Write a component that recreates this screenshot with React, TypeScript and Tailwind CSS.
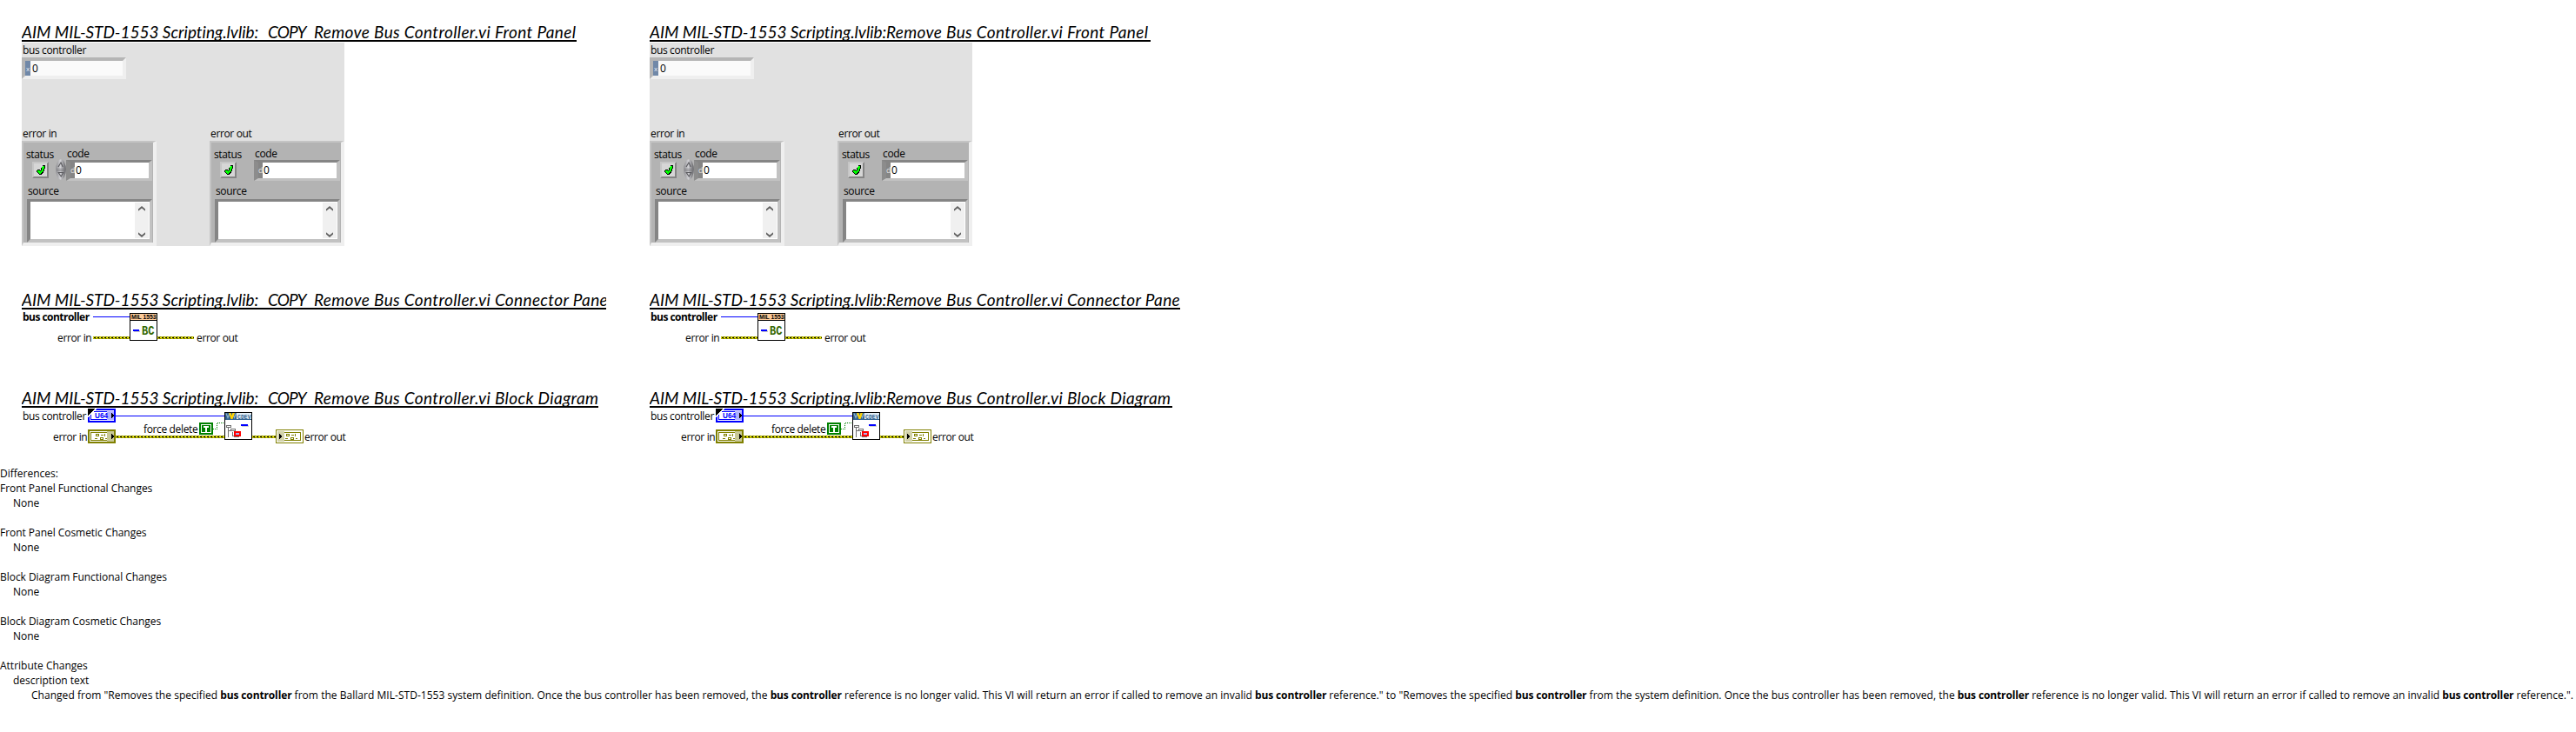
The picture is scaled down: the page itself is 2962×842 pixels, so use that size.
import type { ReactNode } from "react";

const LABEL = "font-['Open_Sans',sans-serif] text-[12px] tracking-[-0.36px] leading-[14px] text-black whitespace-nowrap";

function Heading({ copy, kind, width }: { copy: boolean; kind: string; width: string }) {
  return (
    <div className={`h-5 border-b-2 border-black ${width}`}>
      <h2 className="flex h-[18px] overflow-hidden whitespace-pre font-['Lato',sans-serif] text-[19px] italic leading-[17px] text-black [font-variant-ligatures:none]">
        <span className="w-[272px] shrink-0 tracking-[-0.02px]">AIM MIL-STD-1553 Scripting.lvlib:</span>
        {copy && <span className="w-[64px] shrink-0 pl-[11px] tracking-[-0.9px]">COPY</span>}
        <span className="tracking-[0.36px]">Remove Bus Controller.vi {kind}</span>
      </h2>
    </div>
  );
}

function CheckButton() {
  return (
    <div className="flex h-[19px] w-[19px] items-center justify-center border-2 border-t-[#c6c6c6] border-l-[#c6c6c6] border-r-[#858585] border-b-[#858585] bg-[#d6d6d6]">
      <svg width="12" height="13" viewBox="0 0 12 13" shapeRendering="crispEdges">
        <path d="M8 1h3v3l-1 1v2l-1 1v1l-2 3H4L1 9V7l1-1h2l1 1 1-1V4l2-2z" fill="#000" />
        <path d="M8 2h2v2L9 5v2L8 8 6 11H4L2 9V7h2l1 1 2-2V4z" fill="#00ff00" />
      </svg>
    </div>
  );
}

function Spinner() {
  return (
    <svg width="12" height="24" viewBox="0 0 12 24" className="-mt-px -ml-px block">
      <defs>
        <linearGradient id="knob" x1="0" x2="1">
          <stop offset="0" stopColor="#8a8a8e" />
          <stop offset="0.45" stopColor="#d2d2d6" />
          <stop offset="1" stopColor="#606064" />
        </linearGradient>
      </defs>
      <ellipse cx="6" cy="12" rx="5.8" ry="11.7" fill="url(#knob)" />
      <path d="M1 11.5h10M1 13.5h10" stroke="#77777b" strokeWidth="0.8" />
      <path d="M3 9l3-5 2.2 5M3.2 15.500h5.600l-2.600 4.500z" fill="none" stroke="#5a5a5e" strokeWidth="1.100" />
    </svg>
  );
}

function ScrollArrow({ up }: { up: boolean }) {
  return (
    <svg width="8" height="6" viewBox="0 0 8 6">
      <path d={up ? "M0 5.800V3.600L4 0l4 3.600v2.200L4 2.500z" : "M0 0.200v2.200L4 6l4-3.600V0.200L4 3.500z"} fill="#606060" />
    </svg>
  );
}

function Cluster({ control }: { control: boolean }) {
  return (
    <div className="h-[121px] w-[155px] border-t-2 border-l-2 border-r-4 border-b-4 border-t-[#c4c4c4] border-l-[#c4c4c4] border-r-[#efefef] border-b-[#efefef] bg-[#b3b3b3]">
      <div className="flex h-[20px] items-end">
        <span className={`${LABEL} -mb-px w-[47px] pl-[3px]`}>status</span>
        <span className={`${LABEL} pl-[3px]`}>code</span>
      </div>
      <div className="flex h-[25px]">
        <div className="w-[38px] pl-[10px] pt-[2px]">
          <CheckButton />
        </div>
        <div className="w-[11px] shrink-0">{control && <Spinner />}</div>
        <div className="flex h-[24px] w-[99px] border-t-[3px] border-r-4 border-b-[3px] border-l-[5px] border-t-[#858585] border-r-[#c2c2c2] border-b-[#c2c2c2] border-l-[#8c8c8c] bg-white">
          <span className="h-full w-[5px] bg-[#858585] font-['Open_Sans',sans-serif] text-[9px] leading-[18px] text-[#e0e0e0]">d</span>
          <span className={`${LABEL} pl-[1px] leading-[18px]`}>0</span>
        </div>
      </div>
      <div className={`${LABEL} h-[20px] pl-[5px] pt-[4px]`}>source</div>
      <div className="ml-1 flex h-[50px] w-[144px] justify-end border-t-[3px] border-r-[3px] border-b-4 border-l-4 border-t-[#858585] border-r-[#c2c2c2] border-b-[#c2c2c2] border-l-[#858585] bg-white p-px">
        <div className="flex h-full w-4 flex-col items-center justify-between bg-[#f0f0f0] pt-1 pb-px">
          <ScrollArrow up />
          <ScrollArrow up={false} />
        </div>
      </div>
    </div>
  );
}

function FrontPanel() {
  return (
    <div className="mt-px h-[234px] w-[371px] bg-[#e1e1e1]">
      <div className={`${LABEL} h-[17px] pl-px pt-[2px]`}>bus controller</div>
      <div className="flex h-[25px] w-[120px] border-4 border-[#efefef] border-t-[#b5b5b5] border-l-[#b5b5b5] bg-[#fafafa]">
        <span className="h-full w-[6px] bg-[#7088a8] pl-[1px] font-['Open_Sans',sans-serif] text-[8px] leading-[18px] text-[#e6ecf4]">x</span>
        <span className={`${LABEL} pl-[2px] leading-[17px]`}>0</span>
      </div>
      <div className="mt-[56px] flex">
        <div className="w-[216px]">
          <div className={`${LABEL} h-[15px] pl-px`}>error in</div>
          <Cluster control />
        </div>
        <div>
          <div className={`${LABEL} h-[15px] pl-px`}>error out</div>
          <Cluster control={false} />
        </div>
      </div>
    </div>
  );
}

function ErrorWire({ x, y, w }: { x: number; y: number; w: number }) {
  return (
    <g shapeRendering="crispEdges">
      <rect x={x} y={y} width={w} height="3" fill="#808000" />
      <path d={`M${x} ${y + 0.5}h${w}M${x} ${y + 2.5}h${w}`} stroke="#b8b800" strokeDasharray="2 2" />
      <path d={`M${x} ${y + 1.5}h${w}`} stroke="#ffff00" />
      <path d={`M${x + 1} ${y + 1.5}h${w - 1}`} stroke="#000" strokeDasharray="2 2" />
    </g>
  );
}

function Label({ x, y, bold, children }: { x: number; y: number; bold?: boolean; children: ReactNode }) {
  return (
    <text
      x={x}
      y={y}
      className={
        bold
          ? "font-['Open_Sans',sans-serif] text-[12px] font-bold tracking-[-0.53px]"
          : "font-['Open_Sans',sans-serif] text-[12px] tracking-[-0.36px]"
      }
    >
      {children}
    </text>
  );
}

function ConnectorPane() {
  return (
    <svg width="371" height="93" viewBox="25 356 371 93" className="block">
      <Label x={26} y={369} bold>bus controller</Label>
      <Label x={66} y={393}>error in</Label>
      <Label x={226} y={393}>error out</Label>
      <rect x="107" y="364" width="42" height="1" fill="#0000ff" />
      <ErrorWire x={107} y={387} w={42} />
      <ErrorWire x={181} y={387} w={42} />
      <g shapeRendering="crispEdges">
        <rect x="149.500" y="360.500" width="31" height="31" fill="#fff" stroke="#000" />
        <rect x="150" y="361" width="30" height="7" fill="#ffcc99" />
        <rect x="150" y="368" width="30" height="1" fill="#000" />
        <rect x="154" y="380" width="7" height="2" fill="#c8c8c8" />
        <rect x="153" y="379" width="7" height="2" fill="#0000ff" />
      </g>
      <text x="151" y="367" textLength="28.500" lengthAdjust="spacingAndGlyphs" className="font-['Liberation_Sans',sans-serif] text-[7px] font-bold">MIL 1553</text>
      <text x="163" y="385" textLength="14.500" lengthAdjust="spacingAndGlyphs" fill="#336600" className="font-['Liberation_Mono',monospace] text-[14px] font-bold">BC</text>
    </svg>
  );
}

function ClusterGlyph({ x, y }: { x: number; y: number }) {
  return (
    <g transform={`translate(${x} ${y})`} fill="none" stroke="#808000" shapeRendering="crispEdges">
      <path d="M1.500 0.500h3v2h-3zM7 1.500h3M11.500 0v3M0 5.500h3M6.500 4.500h3v2h-3zM12 5.500h2" />
    </g>
  );
}

function BlockDiagram() {
  return (
    <svg width="373" height="67" viewBox="25 469 373 67" className="block">
      <Label x={26} y={483}>bus controller</Label>
      <Label x={61} y={507}>error in</Label>
      <Label x={165} y={498}>force delete</Label>
      <Label x={350} y={507}>error out</Label>
      <rect x="133" y="478" width="125" height="1" fill="#0000ff" />
      <ErrorWire x={133} y={501} w={125} />
      <ErrorWire x={290} y={501} w={27} />
      <path d="M245 493.500h4.500v-7h8.500" fill="none" stroke="#008000" strokeDasharray="1 1" shapeRendering="crispEdges" />

      <g shapeRendering="crispEdges">
        <rect x="102" y="471" width="30" height="14" fill="#fff" stroke="#0000ff" strokeWidth="2" />
        <rect x="104.500" y="473.500" width="25" height="9" fill="#fff" stroke="#0000ff" />
        <rect x="123" y="473" width="8" height="10" fill="#b0b0ff" />
        <path d="M108 470h3l-10 10v-3z" fill="#fff" />
        <path d="M101 470h8l-8 8z" fill="#000" />
        <path d="M128 474v8l3-4z" fill="#000" />
      </g>
      <text x="109" y="481" textLength="15" lengthAdjust="spacingAndGlyphs" fill="#0000ff" className="font-['Liberation_Sans',sans-serif] text-[8.5px] font-bold">U64</text>

      <g shapeRendering="crispEdges">
        <rect x="102" y="495" width="30" height="14" fill="#fff" stroke="#808000" strokeWidth="2" />
        <rect x="104.500" y="497.500" width="25" height="9" fill="#fff" stroke="#808000" />
        <rect x="123" y="496" width="8" height="12" fill="#c8c896" />
        <path d="M128 498v8l3-4z" fill="#000" />
        <rect x="317.500" y="494.500" width="31" height="15" fill="#fff" stroke="#808000" />
        <rect x="320.500" y="497.500" width="25" height="9" fill="#fff" stroke="#808000" />
        <rect x="319" y="496" width="8" height="12" fill="#d2d2aa" />
        <path d="M321 498v8l3-4z" fill="#000" />
      </g>
      <ClusterGlyph x={109} y={499} />
      <ClusterGlyph x={328} y={499} />

      <g shapeRendering="crispEdges">
        <rect x="229" y="486" width="16" height="14" fill="#008000" />
        <rect x="231.500" y="488.500" width="11" height="9" fill="#008000" stroke="#fff" />
        <path d="M234 490h6v2h-2v5h-2v-5h-2z" fill="#fff" />
      </g>

      <g shapeRendering="crispEdges">
        <rect x="258.500" y="474.500" width="31" height="31" fill="#fff" stroke="#000" />
        <rect x="259" y="475" width="13" height="7" fill="#31628f" />
        <rect x="272" y="475" width="17" height="7" fill="#e6f1f8" />
        <rect x="259" y="482" width="30" height="1" fill="#31628f" />
      </g>
      <path d="M260 475.500l2 5 2-5M267.500 475.500l2 5 2-5" fill="none" stroke="#8fb2cc" strokeWidth="1.200" />
      <path d="M263 475h2.500l1 3 1-3h2.500l-2.500 7h-2z" fill="#ffd200" />
      <text x="273" y="481.500" textLength="15.500" lengthAdjust="spacingAndGlyphs" fill="#31628f" className="font-['Liberation_Mono',monospace] text-[8px] font-bold">CDEV</text>
      <g shapeRendering="crispEdges">
        <rect x="278" y="489" width="8" height="2" fill="#d0d0d0" />
        <rect x="277" y="488" width="8" height="2" fill="#0000ff" />
        <path d="M262.500 492v11M262.500 495.500h4M267.500 497v5M267 501.500h3M269 502.500h6" fill="none" stroke="#707070" />
        <rect x="260.500" y="489.500" width="5" height="2" fill="#fff" stroke="#707070" />
        <rect x="265.500" y="493.500" width="5" height="2" fill="#fff" stroke="#707070" />
        <rect x="270" y="497" width="6" height="4" fill="#a0a0e0" stroke="#ff0000" strokeWidth="2" />
        <rect x="271" y="498" width="4" height="2" fill="#b0b0e8" />
      </g>
    </svg>
  );
}

function Column({ copy }: { copy: boolean }) {
  return (
    <div className="flex w-[722px] shrink-0 flex-col pl-[25px]">
      <section className="h-[336px] pt-7">
        <Heading copy={copy} kind="Front Panel" width={copy ? "w-[638px]" : "w-[576px]"} />
        <FrontPanel />
      </section>
      <section className="h-[113px]">
        <Heading copy={copy} kind="Connector Pane" width={copy ? "w-[672px]" : "w-[610px]"} />
        <ConnectorPane />
      </section>
      <section className="h-[87px]">
        <Heading copy={copy} kind="Block Diagram" width={copy ? "w-[663px]" : "w-[601px]"} />
        <BlockDiagram />
      </section>
    </div>
  );
}

const GROUPS = [
  "Front Panel Functional Changes",
  "Front Panel Cosmetic Changes",
  "Block Diagram Functional Changes",
  "Block Diagram Cosmetic Changes",
];

function Differences() {
  const bc = <b className="tracking-[-0.13px]">bus controller</b>;
  const tail = (
    <>
      system definition. Once the bus controller has been removed, the {bc} reference is no longer valid. This VI will return an error if called to remove an invalid {bc} reference."
    </>
  );
  return (
    <div className="whitespace-nowrap font-['Open_Sans',sans-serif] text-[12px] leading-[17px] text-black">
      <p>Differences:</p>
      {GROUPS.map((g) => (
        <div key={g} className="pb-[17px] tracking-[-0.04px]">
          <p>{g}</p>
          <p className="pl-[15px]">None</p>
        </div>
      ))}
      <p>Attribute Changes</p>
      <p className="pl-[15px]">description text</p>
      <p className="pl-9 tracking-[0.03px]">
        Changed from "Removes the specified {bc} from the Ballard MIL-STD-1553 {tail} to "Removes the specified {bc} from the {tail}.
      </p>
    </div>
  );
}

export default function App() {
  return (
    <main className="h-[842px] w-[2962px] overflow-hidden bg-white">
      <div className="flex">
        <Column copy />
        <Column copy={false} />
      </div>
      <Differences />
    </main>
  );
}
